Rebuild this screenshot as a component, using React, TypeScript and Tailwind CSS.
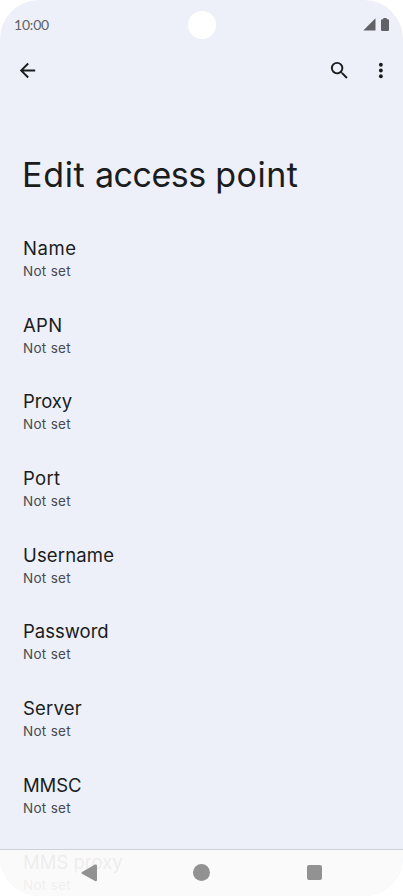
const fields = [
  { name: "Name", spacing: "tracking-[0.6px]" },
  { name: "APN", spacing: "tracking-[0.3px]" },
  { name: "Proxy", spacing: "tracking-[-0.1px]" },
  { name: "Port", spacing: "tracking-[0.3px]" },
  { name: "Username", spacing: "tracking-[0.15px]" },
  { name: "Password", spacing: "tracking-[0px]" },
  { name: "Server", spacing: "tracking-[0.2px]" },
  { name: "MMSC", spacing: "tracking-[-0.1px]" },
  { name: "MMS proxy", spacing: "tracking-[0px]" },
];

function StatusBar() {
  return (
    <div className="flex h-[50px] items-center justify-between pl-[14px] pr-[14px] text-[#606266]">
      <span className="w-[80px] text-[14px] leading-5 tracking-[-0.2px] font-['Lato',sans-serif]">10:00</span>
      <div className="h-7 w-7 rounded-full bg-white" />
      <div className="mb-[2px] flex w-[80px] items-center justify-end gap-[5px]">
        <svg width="13" height="13" viewBox="0 0 13 13" fill="currentColor">
          <path d="M12.5 0.3V12.5H0.3z" />
        </svg>
        <svg width="8" height="13" viewBox="0 0 8 13" fill="currentColor">
          <path d="M2.3 0h3.4v1.2H7a1 1 0 0 1 1 1V12a1 1 0 0 1-1 1H1a1 1 0 0 1-1-1V2.200a1 1 0 0 1 1-1h1.300z" />
        </svg>
      </div>
    </div>
  );
}

function AppBar() {
  return (
    <div className="flex h-10 items-center pl-[16px] pr-[11px] text-[#1a1c1e]">
      <svg width="23" height="23" viewBox="0 0 24 24" fill="currentColor">
        <path d="M20 11H7.830l5.590-5.590L12 4l-8 8 8 8 1.410-1.410L7.830 13H20z" />
      </svg>
      <svg className="ml-auto" width="23" height="23" viewBox="0 0 24 24" fill="currentColor">
        <path d="M15.500 14h-.79l-.28-.27A6.471 6.471 0 0 0 16 9.500 6.500 6.500 0 1 0 9.500 16c1.610 0 3.090-.59 4.230-1.570l.27.28v.79l5 4.990L20.490 19zm-6 0C7.010 14 5 11.990 5 9.500S7.010 5 9.500 5 14 7.010 14 9.500 11.990 14 9.500 14z" />
      </svg>
      <svg className="ml-[18px]" width="23" height="23" viewBox="0 0 24 24" fill="currentColor">
        <circle cx="12.400" cy="6" r="2" />
        <circle cx="12.400" cy="12" r="2" />
        <circle cx="12.400" cy="18" r="2" />
      </svg>
    </div>
  );
}

function NavBar() {
  return (
    <div className="absolute inset-x-0 bottom-0 flex h-[47px] items-center border-t border-[#cfd0d4] bg-[#fbfafa]/94 pb-px text-[#929292]">
      <svg className="ml-[81px]" width="16" height="18" viewBox="0 0 16 18" fill="currentColor">
        <path d="M14 .6a1.300 1.300 0 0 1 2 1V16a1.300 1.300 0 0 1-2 1L1 9.700a1 1 0 0 1 0-1.600z" />
      </svg>
      <div className="ml-[96px] h-[17px] w-[17px] rounded-full bg-[#929292]" />
      <div className="ml-[97px] h-[15px] w-[15px] rounded-[2px] bg-[#929292]" />
    </div>
  );
}

export default function App() {
  return (
    <div className="h-[896px] w-[403px] overflow-hidden bg-white font-['Inter',sans-serif]">
      <div className="relative h-full overflow-hidden rounded-[39px] bg-[#edf0f8]">
        <StatusBar />
        <AppBar />
        <h1 className="mt-[63px] pl-[22px] text-[34px] leading-[44px] whitespace-nowrap text-[#1a1c20]">
          <span className="tracking-[0.7px]">Edit</span>{" "}
          <span className="tracking-[-0.5px]">access</span>{" "}
          <span className="tracking-[0.5px]">point</span>
        </h1>
        <div className="mt-[39px] pl-[23px]">
          {fields.map((field) => (
            <div key={field.name} className="h-[76.700px]">
              <div className={`text-[18.500px] leading-[24px] text-[#1a1c20] ${field.spacing}`}>
                {field.name}
              </div>
              <div className="text-[13.500px] leading-[22.500px] tracking-[0.3px] text-[#474a50]">Not set</div>
            </div>
          ))}
        </div>
        <NavBar />
      </div>
    </div>
  );
}
